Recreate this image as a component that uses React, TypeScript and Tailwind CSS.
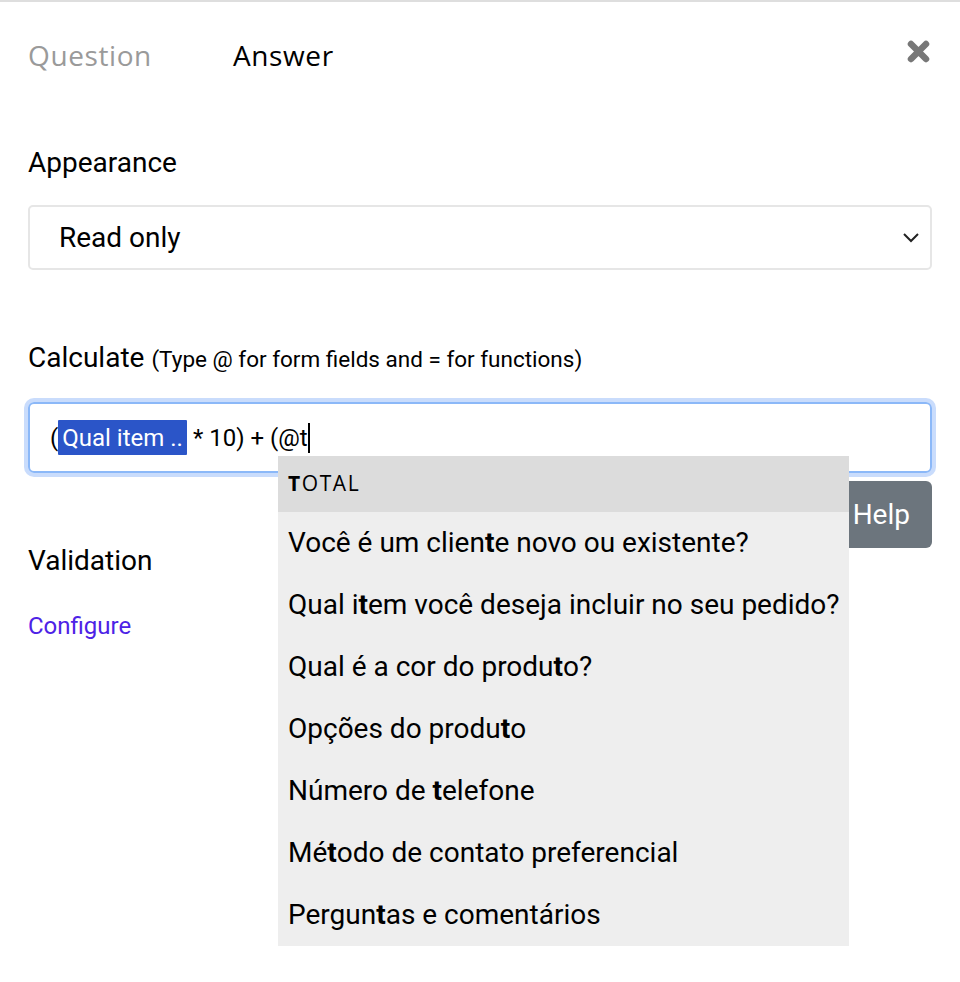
import React from "react";

const roboto = { fontFamily: "Roboto, 'Liberation Sans', sans-serif" };
const poppinsLike = { fontFamily: "'Open Sans', sans-serif" };

function Item({ before, bold, after }: { before: string; bold: string; after: string }) {
  return (
    <div className="h-[62px] flex items-center px-[10px] text-[28px] leading-none text-black whitespace-pre">
      {before}
      <b className="font-bold">{bold}</b>
      {after}
    </div>
  );
}

export default function App() {
  return (
    <div className="w-[960px] h-[982px] bg-white border-t-2 border-[#dedede] relative" style={roboto}>
      {/* Tabs */}
      <div className="flex items-center h-[108px] pb-[2px] pl-[28px] pr-[30px]">
        <div className="text-[28px] tracking-[0.6px] text-[#9a9a9a] w-[205px]" style={poppinsLike}>
          Question
        </div>
        <div className="text-[28px] tracking-[0.6px] text-black" style={poppinsLike}>
          Answer
        </div>
        <div className="ml-auto self-start mt-[38px]">
          <svg width="23" height="23" viewBox="0 0 23 23">
            <path d="M4 4 L19 19 M19 4 L4 19" stroke="#777" strokeWidth="6.5" strokeLinecap="round" />
          </svg>
        </div>
      </div>

      <div className="px-[28px]">
        <div className="text-[28px] text-black leading-none mt-[39px]">Appearance</div>
        <div className="mt-[28px] h-[65px] border-2 border-[#e6e6e6] rounded-[5px] flex items-center pl-[29px] pr-[10px]">
          <span className="text-[28px] text-black">Read only</span>
          <svg className="ml-auto" width="18" height="12" viewBox="0 0 18 12">
            <path d="M2 2 L9 9 L16 2" stroke="#222" strokeWidth="2" fill="none" />
          </svg>
        </div>

        <div className="mt-[74px] flex items-baseline leading-none">
          <span className="text-[28px] text-black">Calculate</span>
          <span className="text-[22.5px] text-black ml-[7px]">(Type @ for form fields and = for functions)</span>
        </div>

        <div className="relative mt-[30px]">
          <div className="h-[71px] border-2 border-[#8bb8f8] rounded-[6px] shadow-[0_0_0_4px_#c9dcfc] flex items-center pl-[20px] text-[24px] text-black">
            <span>(</span>
            <span className="bg-[#2b55c8] text-white px-[4px] h-[35px] flex items-center rounded-[1px]">Qual item ..</span>
            <span className="ml-[6px] whitespace-pre">* 10) + (@t</span>
            <span className="w-[2px] h-[30px] bg-black" />
          </div>

          <div className="absolute left-[250px] top-[54px] w-[571px] bg-[#eeeeee] z-10">
            <div className="h-[56px] bg-[#dcdcdc] flex items-center px-[10px] text-[21px] tracking-[1.6px] text-black" style={poppinsLike}>
              <b className="font-bold">T</b>OTAL
            </div>
            <Item before="Você é um clien" bold="t" after="e novo ou existente?" />
            <Item before="Qual i" bold="t" after="em você deseja incluir no seu pedido?" />
            <Item before="Qual é a cor do produ" bold="t" after="o?" />
            <Item before="Opções do produ" bold="t" after="o" />
            <Item before="Número de " bold="t" after="elefone" />
            <Item before="Mé" bold="t" after="odo de contato preferencial" />
            <Item before="Pergun" bold="t" after="as e comentários" />
          </div>
        </div>

        <div className="flex items-start mt-[8px]">
          <div className="flex flex-col">
            <div className="text-[28px] text-black mt-[66px] leading-none">Validation</div>
            <div className="text-[24px] text-[#4d22e6] mt-[39px] leading-none">Configure</div>
          </div>
          <button className="ml-auto h-[67px] w-[120px] rounded-[6px] bg-[#6c757d] text-white text-[28px] flex items-center justify-end pr-[22px]">
            Help
          </button>
        </div>
      </div>
    </div>
  );
}
